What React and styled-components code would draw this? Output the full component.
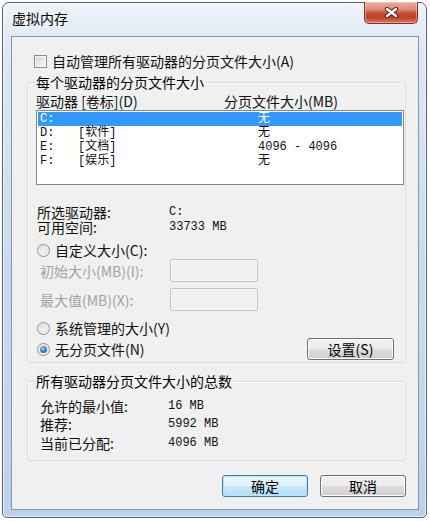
import styled, { createGlobalStyle } from "styled-components";

const GlobalStyle = createGlobalStyle`
  html, body { margin: 0; padding: 0; background: #ffffff; }
  body {
    width: 430px;
    height: 521px;
    overflow: hidden;
    font-family: "Noto Sans CJK SC", "Liberation Sans", sans-serif;
    color: #111;
  }
  * { box-sizing: border-box; }
`;

const Window = styled.div`
  margin: 2px 0 0 2px;
  width: 425px;
  height: 516px;
  border: 1px solid #56616f;
  border-radius: 7px 7px 5px 5px;
  background: linear-gradient(180deg, #eef3f9 0%, #dfe8f4 8%, #cddcef 45%, #bcd2eb 100%);
  box-shadow: inset 0 0 0 1px rgba(255, 255, 255, 0.65);
  display: flex;
  flex-direction: column;
  padding: 0 7px 7px 8px;
`;

const TitleBar = styled.div`
  height: 33px;
  display: flex;
  align-items: flex-start;
`;

const Title = styled.div`
  margin-top: 5px;
  padding-left: 1px;
  font-size: 14px;
  line-height: 20px;
  color: #000;
  text-shadow: 0 0 6px rgba(255, 255, 255, 0.95);
`;

const CloseButton = styled.div`
  margin: -1px 1px 0 auto;
  width: 54px;
  height: 22px;
  border: 1px solid #7d3328;
  border-top: none;
  border-radius: 0 0 5px 5px;
  background: linear-gradient(180deg, #eab2a2 0%, #dd8a74 35%, #c8472f 55%, #c24028 75%, #dc7a62 100%);
  box-shadow: inset 0 0 0 1px rgba(255, 220, 210, 0.45);
  display: flex;
  align-items: center;
  justify-content: center;
`;

const Client = styled.div`
  flex: 1;
  background: #f0f0f0;
  border: 1px solid #8396ad;
  padding: 15px 12px 12px 15px;
  display: flex;
  flex-direction: column;
`;

const CheckRow = styled.label`
  height: 18px;
  padding-left: 7px;
  display: flex;
  align-items: center;
  gap: 5px;
  font-size: 14px;
  line-height: 18px;
`;

const CheckBox = styled.span`
  width: 13px;
  height: 13px;
  border: 1px solid #8f8f8f;
  background: linear-gradient(135deg, #d6d6d6 0%, #ebebeb 60%, #f8f8f8 100%);
  box-shadow: inset 0 0 0 1px #f4f4f4;
  flex: none;
`;

const GroupBox = styled.fieldset`
  margin: ${(p) => p.$top}px 0 0;
  padding: 0;
  min-width: 0;
  border: 1px solid #d5dfe5;
  border-radius: 3px;
  box-shadow: inset 1px 1px 0 #fdfdfd;
`;

const Legend = styled.legend`
  margin-left: 7px;
  padding: 0 1px;
  font-size: 14px;
  line-height: 16px;
  color: #000;
`;

const GroupBody = styled.div`
  padding: ${(p) => p.$pad};
  display: flex;
  flex-direction: column;
`;

const HeaderRow = styled.div`
  margin-top: 3px;
  display: grid;
  grid-template-columns: 188px 1fr;
  font-size: 14px;
  line-height: 16px;
`;

const ListBox = styled.div`
  margin-top: 1px;
  height: 75px;
  border: 1px solid #828790;
  background: #ffffff;
  padding: 1px;
`;

const ListRow = styled.div`
  height: 14px;
  padding-left: 2px;
  display: grid;
  grid-template-columns: 38px 180px 1fr;
  align-items: center;
  font-family: "Liberation Mono", "Noto Sans CJK SC", monospace;
  font-size: 12px;
  line-height: 14px;
  color: ${(p) => (p.$selected ? "#ffffff" : "#111")};
  background: ${(p) => (p.$selected ? "#3399ff" : "transparent")};
`;

const InfoGrid = styled.div`
  margin-top: ${(p) => p.$top}px;
  padding-left: ${(p) => p.$indent}px;
  display: grid;
  grid-template-columns: ${(p) => p.$col}px 1fr;
  grid-auto-rows: ${(p) => p.$row}px;
  align-items: center;
`;

const InfoLabel = styled.span`
  font-size: 14px;
  line-height: 15px;
`;

const InfoValue = styled.span`
  font-family: "Liberation Mono", monospace;
  font-size: 12px;
  line-height: 15px;
`;

const RadioRow = styled.div`
  margin-top: ${(p) => p.$top}px;
  height: ${(p) => p.$h}px;
  padding-left: 1px;
  display: flex;
  align-items: center;
  gap: 5px;
  font-size: 14px;
`;

const Radio = styled.span`
  width: 13px;
  height: 13px;
  border-radius: 50%;
  border: 1px solid #8d8d8d;
  background: radial-gradient(circle at 50% 60%, #f4f4f4 0%, #e2e2e2 55%, #cfcfcf 100%);
  box-shadow: inset 0 0 0 1px #f7f7f7;
  display: flex;
  align-items: center;
  justify-content: center;
  flex: none;

  &::after {
    content: "";
    display: ${(p) => (p.$checked ? "block" : "none")};
    width: 7px;
    height: 7px;
    border-radius: 50%;
    background: radial-gradient(circle at 40% 35%, #9fd0f7 0%, #3f8ad1 45%, #164f8e 100%);
  }
`;

const InputRow = styled.div`
  margin-top: ${(p) => p.$top}px;
  padding-left: 4px;
  display: grid;
  grid-template-columns: 130px 88px;
  align-items: center;
  font-size: 14px;
  color: #a3a3a3;
`;

const DisabledInput = styled.div`
  height: 23px;
  border: 1px solid #c3c3c3;
  border-radius: 2px;
  background: #f0f0f0;
  box-shadow: inset 0 0 0 1px #f9f9f9;
`;

const Button = styled.div`
  width: ${(p) => p.$w}px;
  height: 22px;
  margin-left: ${(p) => (p.$auto ? "auto" : "0")};
  margin-right: ${(p) => p.$right || 0}px;
  border: 1px solid ${(p) => (p.$default ? "#3c7fb1" : "#707070")};
  border-radius: 3px;
  background: ${(p) =>
    p.$default
      ? "linear-gradient(180deg, #eaf6fd 0%, #dff2fc 48%, #c6e9fc 52%, #b0def8 100%)"
      : "linear-gradient(180deg, #f2f2f2 0%, #ebebeb 48%, #dddddd 52%, #cfcfcf 100%)"};
  box-shadow: inset 0 0 0 1px ${(p) => (p.$default ? "#b6e3fb" : "#fbfbfb")};
  display: flex;
  align-items: center;
  justify-content: center;
  font-size: 14px;
  line-height: 20px;
  color: #000;
`;

const ButtonBar = styled.div`
  margin-top: 14px;
  display: flex;
  justify-content: flex-end;
  gap: 12px;
  padding-right: 0;
`;

const drives = [
  { drive: "C:", label: "", size: "无", selected: true },
  { drive: "D:", label: "[软件]", size: "无" },
  { drive: "E:", label: "[文档]", size: "4096 - 4096" },
  { drive: "F:", label: "[娱乐]", size: "无" },
];

const CloseGlyph = () => (
  <svg width="15" height="11" viewBox="0 0 15 11">
    <path d="M3 2 L12 9 M12 2 L3 9" stroke="#5a1a12" strokeWidth="4.2" strokeLinecap="round" />
    <path d="M3 2 L12 9 M12 2 L3 9" stroke="#ffffff" strokeWidth="2.4" strokeLinecap="round" />
  </svg>
);

const App = () => {
  return (
    <>
      <GlobalStyle />
      <Window>
        <TitleBar>
          <Title>虚拟内存</Title>
          <CloseButton>
            <CloseGlyph />
          </CloseButton>
        </TitleBar>

        <Client>
          <CheckRow>
            <CheckBox />
            自动管理所有驱动器的分页文件大小(A)
          </CheckRow>

          <GroupBox $top={4}>
            <Legend>每个驱动器的分页文件大小</Legend>
            <GroupBody $pad="0 1px 2px 8px">
              <HeaderRow>
                <span>驱动器 [卷标](D)</span>
                <span>分页文件大小(MB)</span>
              </HeaderRow>

              <ListBox>
                {drives.map((d) => (
                  <ListRow key={d.drive} $selected={d.selected}>
                    <span>{d.drive}</span>
                    <span>{d.label}</span>
                    <span>{d.size}</span>
                  </ListRow>
                ))}
              </ListBox>

              <InfoGrid $top={20} $indent={1} $col={132} $row={15}>
                <InfoLabel>所选驱动器:</InfoLabel>
                <InfoValue>C:</InfoValue>
                <InfoLabel>可用空间:</InfoLabel>
                <InfoValue>33733 MB</InfoValue>
              </InfoGrid>

              <RadioRow $top={6} $h={18}>
                <Radio />
                自定义大小(C):
              </RadioRow>
              <InputRow $top={0}>
                <span>初始大小(MB)(I):</span>
                <DisabledInput />
              </InputRow>
              <InputRow $top={6}>
                <span>最大值(MB)(X):</span>
                <DisabledInput />
              </InputRow>

              <RadioRow $top={7} $h={20}>
                <Radio />
                系统管理的大小(Y)
              </RadioRow>
              <RadioRow $top={0} $h={22}>
                <Radio $checked />
                无分页文件(N)
                <Button $w={87} $auto $right={10}>设置(S)</Button>
              </RadioRow>
            </GroupBody>
          </GroupBox>

          <GroupBox $top={10}>
            <Legend>所有驱动器分页文件大小的总数</Legend>
            <GroupBody $pad="8px 1px 7px 12px">
              <InfoGrid $top={0} $indent={0} $col={128} $row={18.5}>
                <InfoLabel>允许的最小值:</InfoLabel>
                <InfoValue>16 MB</InfoValue>
                <InfoLabel>推荐:</InfoLabel>
                <InfoValue>5992 MB</InfoValue>
                <InfoLabel>当前已分配:</InfoLabel>
                <InfoValue>4096 MB</InfoValue>
              </InfoGrid>
            </GroupBody>
          </GroupBox>

          <ButtonBar>
            <Button $w={86} $default>确定</Button>
            <Button $w={86}>取消</Button>
          </ButtonBar>
        </Client>
      </Window>
    </>
  );
};

export default App;
